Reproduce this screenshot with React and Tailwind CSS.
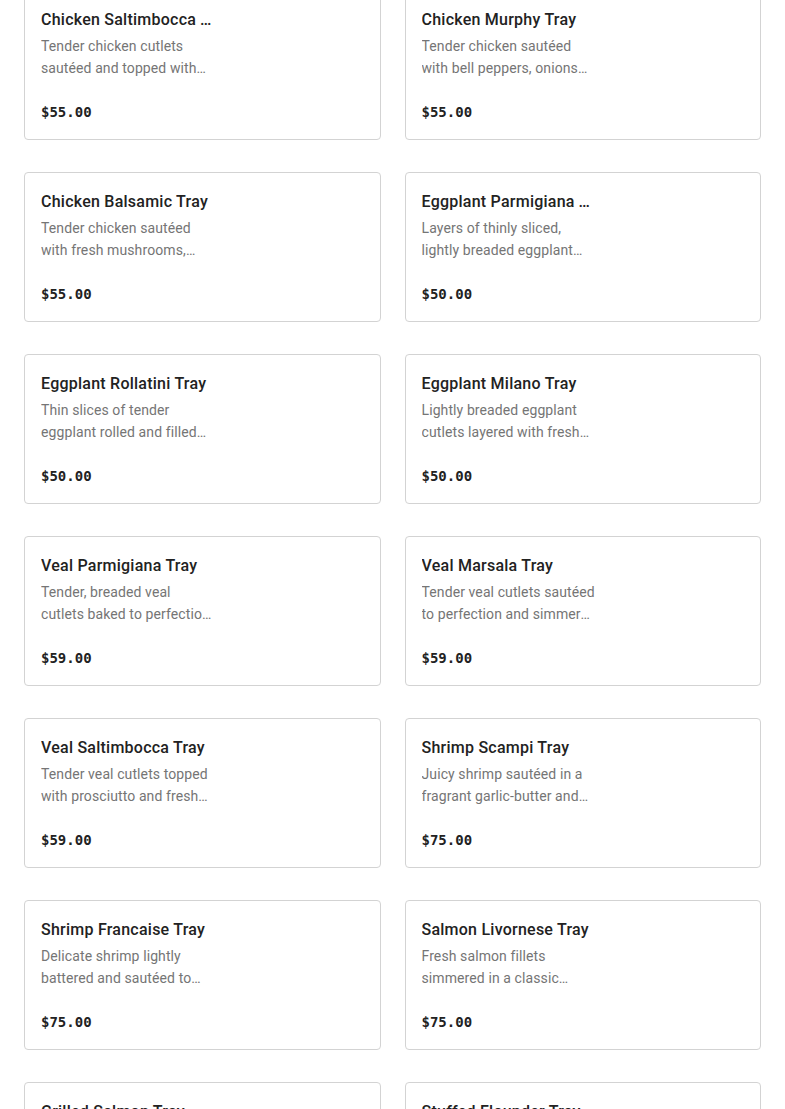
import React from "react";

const items = [
  ["Chicken Saltimbocca Tray", "Tender chicken cutlets sautéed and topped with prosciutto and fresh sage", "$55.00"],
  ["Chicken Murphy Tray", "Tender chicken sautéed with bell peppers, onions and potatoes", "$55.00"],
  ["Chicken Balsamic Tray", "Tender chicken sautéed with fresh mushrooms, onions and balsamic glaze", "$55.00"],
  ["Eggplant Parmigiana Tray", "Layers of thinly sliced, lightly breaded eggplant baked with marinara", "$50.00"],
  ["Eggplant Rollatini Tray", "Thin slices of tender eggplant rolled and filled with ricotta", "$50.00"],
  ["Eggplant Milano Tray", "Lightly breaded eggplant cutlets layered with fresh mozzarella", "$50.00"],
  ["Veal Parmigiana Tray", "Tender, breaded veal cutlets baked to perfection with marinara", "$59.00"],
  ["Veal Marsala Tray", "Tender veal cutlets sautéed to perfection and simmered in marsala wine", "$59.00"],
  ["Veal Saltimbocca Tray", "Tender veal cutlets topped with prosciutto and fresh sage", "$59.00"],
  ["Shrimp Scampi Tray", "Juicy shrimp sautéed in a fragrant garlic-butter and white wine sauce", "$75.00"],
  ["Shrimp Francaise Tray", "Delicate shrimp lightly battered and sautéed to golden perfection", "$75.00"],
  ["Salmon Livornese Tray", "Fresh salmon fillets simmered in a classic Livornese sauce", "$75.00"],
  ["Grilled Salmon Tray", "Fresh salmon fillets grilled to perfection", "$75.00"],
  ["Stuffed Flounder Tray", "Tender flounder stuffed with crabmeat", "$75.00"],
];

function Card({ title, desc, price }) {
  return (
    <div className="h-[150px] rounded-[4px] border border-[#d3d3d3] bg-white px-4 pt-[17px]">
      <div className="w-[175px]" style={{ fontFamily: "Roboto, 'Liberation Sans', sans-serif" }}>
        <div className="truncate text-[16px] leading-6 font-medium tracking-[0.24px] text-[#222222]">
          {title}
        </div>
        <div className="mt-[3px] line-clamp-2 text-[14px] leading-[22px] tracking-[0.1px] text-[#757575]">
          {desc}
        </div>
      </div>
      <div className="mt-[23px] text-[14px] leading-5 font-bold text-[#222222]" style={{ fontFamily: "'DejaVu Sans Mono', 'Liberation Mono', monospace" }}>
        {price}
      </div>
    </div>
  );
}

export default function App() {
  return (
    <div className="min-h-screen bg-white overflow-hidden">
      <div className="mt-[-10px] grid grid-cols-2 gap-x-6 gap-y-8 px-6">
        {items.map(([t, d, p]) => (
          <Card key={t} title={t} desc={d} price={p} />
        ))}
      </div>
    </div>
  );
}
